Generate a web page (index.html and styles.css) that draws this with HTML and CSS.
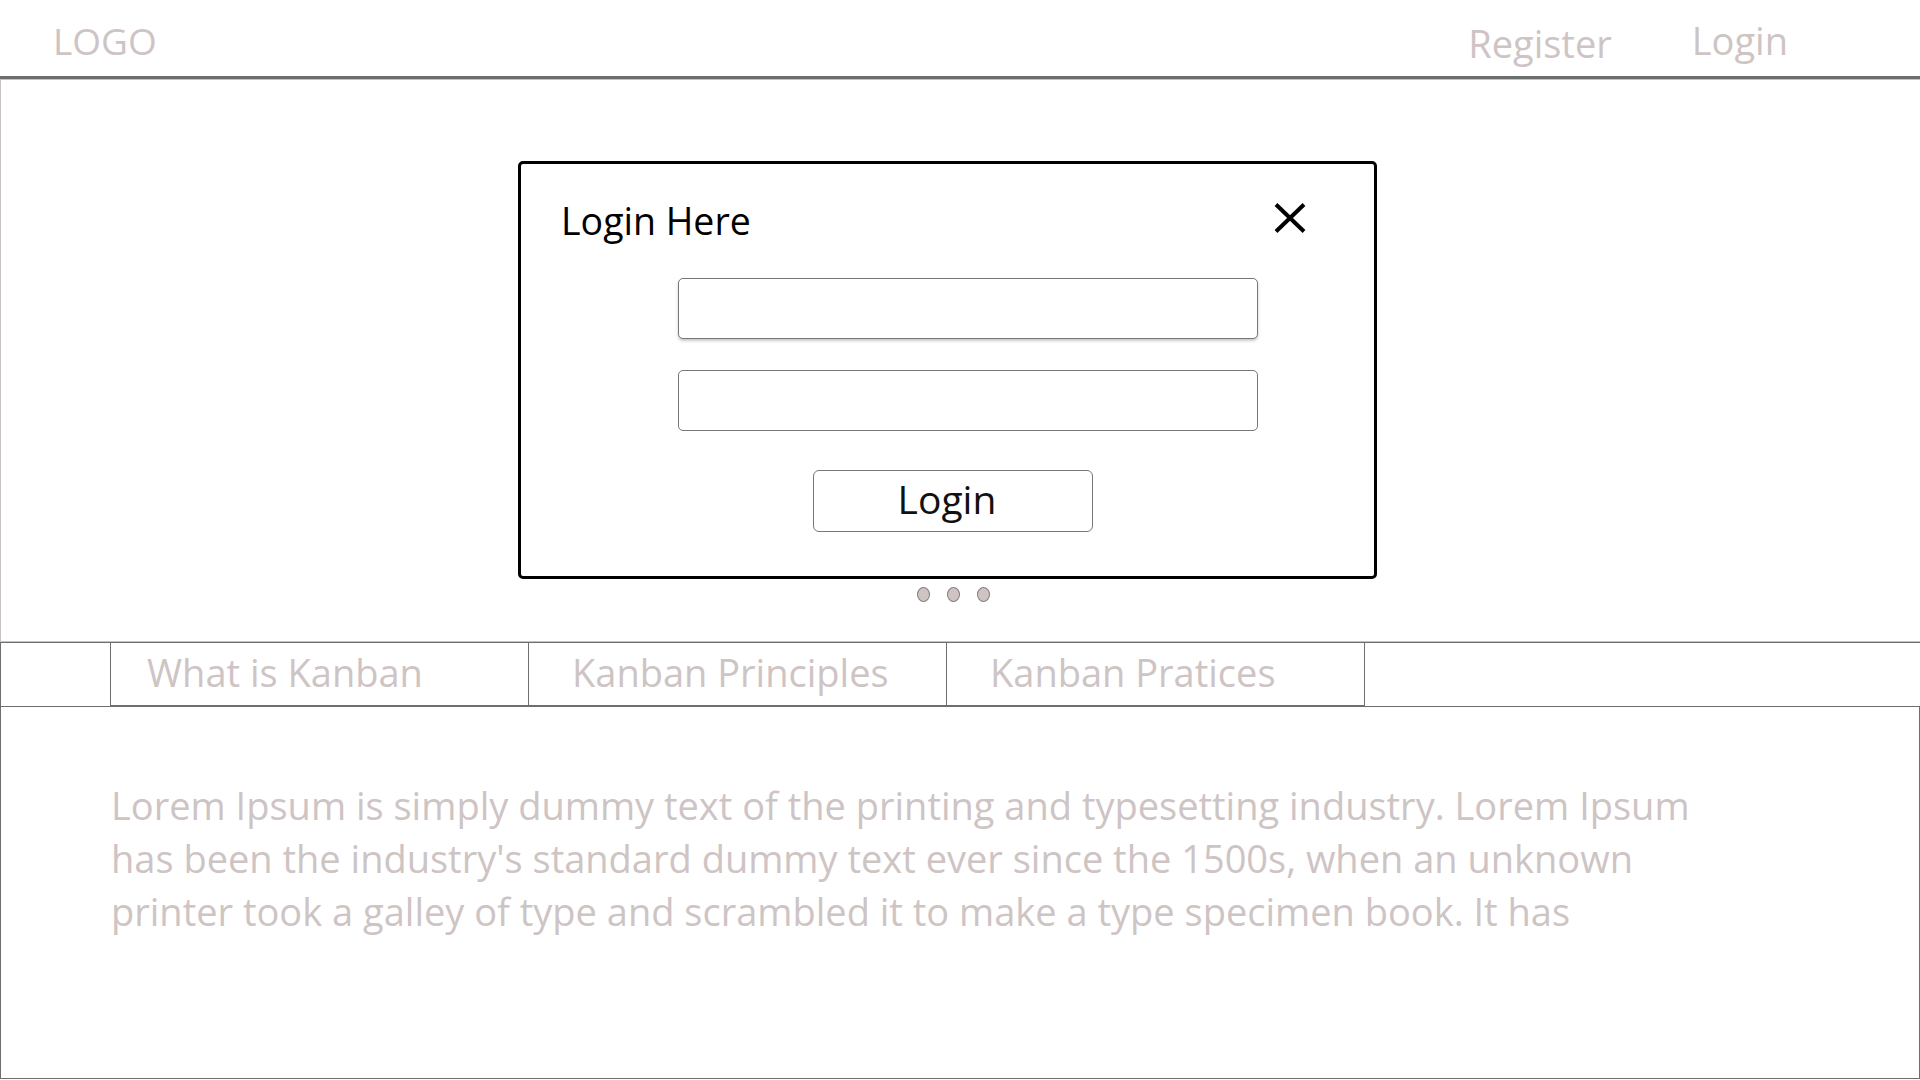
FILE: index.html
```html
<!DOCTYPE html>
<html lang="en">
<head>
<meta charset="utf-8">
<title>Kanban - Login</title>
<link rel="stylesheet" href="styles.css">
</head>
<body>
<header class="topbar">
  <div class="logo">LOGO</div>
  <nav class="nav">
    <a class="nav-link nav-register" href="#">Register</a>
    <a class="nav-link nav-login" href="#">Login</a>
  </nav>
</header>
<main class="page">
  <section class="hero">
    <div class="modal">
      <div class="modal-head">
        <h2 class="modal-title">Login Here</h2>
        <button class="close" aria-label="Close">
          <svg width="32" height="30" viewBox="0 0 32 30"><path d="M2 1.5 L30 28.5 M30 1.5 L2 28.5" stroke="#000" stroke-width="4" fill="none"/></svg>
        </button>
      </div>
      <div class="fields">
        <input class="field field-raised" type="text">
        <input class="field" type="password">
      </div>
      <button class="btn-login">Login</button>
    </div>
    <div class="dots"><span class="dot"></span><span class="dot"></span><span class="dot"></span></div>
  </section>
  <div class="tabs">
    <div class="tab-spacer"></div>
    <div class="tab tab-first">What is Kanban</div>
    <div class="tab">Kanban Principles</div>
    <div class="tab">Kanban Pratices</div>
  </div>
  <section class="content">
    <p class="lorem">Lorem Ipsum is simply dummy text of the printing and typesetting industry. Lorem Ipsum<br>has been the industry's standard dummy text ever since the 1500s, when an unknown<br>printer took a galley of type and scrambled it to make a type specimen book. It has</p>
  </section>
</main>
</body>
</html>
```
FILE: styles.css
```css
* { box-sizing: border-box; }
html, body { margin: 0; padding: 0; }
body {
  width: 1920px;
  height: 1080px;
  overflow: hidden;
  background: #fff;
  font-family: "Open Sans", "Noto Sans", sans-serif;
  color: #cec4c4;
}
.topbar {
  height: 79px;
  border-bottom: 3px solid #6e6e6e;
  display: flex;
  justify-content: space-between;
  align-items: flex-start;
}
.logo {
  font-size: 37px;
  line-height: 1;
  margin: 22px 0 0 53px;
}
.nav { display: flex; align-items: flex-start; margin-right: 132px; }
.nav-link {
  color: #cec4c4;
  text-decoration: none;
  font-size: 38px;
  line-height: 1;
}
.nav-register { margin-top: 24px; margin-right: 80px; }
.nav-login { margin-top: 21px; }

.hero {
  height: 563px;
  border-left: 1px solid #c9c1c1;
  border-top: 1px solid #c9c1c1;
  border-bottom: 1px solid #c9c1c1;
  padding-top: 81px;
}
.modal {
  width: 859px;
  height: 418px;
  margin-left: 517px;
  border: 3px solid #000;
  border-radius: 5px;
  background: #fff;
}
.modal-head {
  height: 114px;
  display: flex;
  justify-content: space-between;
  align-items: flex-start;
  padding: 38px 68px 0 40px;
}
.modal-title {
  margin: 0;
  font-weight: 400;
  font-size: 37.5px;
  line-height: 1;
  color: #000;
}
.close {
  margin-top: 1px;
  padding: 0;
  border: 0;
  background: none;
  width: 32px;
  height: 30px;
  display: block;
}
.close svg { display: block; }
.fields {
  display: flex;
  flex-direction: column;
  gap: 31px;
  padding-left: 157px;
}
.field {
  width: 580px;
  height: 61px;
  border: 1px solid #777;
  border-radius: 5px;
  background: #fff;
  outline: none;
}
.field-raised { box-shadow: 0 2px 3px rgba(0,0,0,0.22); }
.btn-login {
  display: block;
  margin: 39px 0 0 292px;
  width: 280px;
  height: 62px;
  border: 1px solid #777;
  border-radius: 6px;
  background: #fff;
  font-family: "Open Sans", "Noto Sans", sans-serif;
  font-size: 39px;
  line-height: 1;
  color: #111;
  padding: 0 12px 5px 0;
}
.dots {
  display: flex;
  gap: 17px;
  margin: 8px 0 0 916px;
}
.dot {
  width: 13px;
  height: 15px;
  border-radius: 50%;
  background: #cfc4c4;
  border: 1px solid #857c7c;
}

.tabs {
  height: 65px;
  display: flex;
  border-top: 1px solid #6e6e6e;
  border-bottom: 1px solid #6e6e6e;
}
.tab-spacer {
  width: 111px;
  border-left: 1px solid #6e6e6e;
  border-right: 1px solid #6e6e6e;
}
.tab {
  width: 418px;
  border-right: 1px solid #6e6e6e;
  border-bottom: 1px solid #6e6e6e;
  font-size: 38px;
  line-height: 58px;
  padding-left: 43px;
  white-space: nowrap;
}
.tab-first { padding-left: 36px; }

.content {
  height: 372px;
  border-left: 1px solid #6e6e6e;
  border-right: 1px solid #6e6e6e;
  border-bottom: 1px solid #6e6e6e;
  padding: 72px 0 0 110px;
}
.lorem {
  margin: 0;
  font-size: 38px;
  line-height: 53px;
  white-space: nowrap;
}
```
